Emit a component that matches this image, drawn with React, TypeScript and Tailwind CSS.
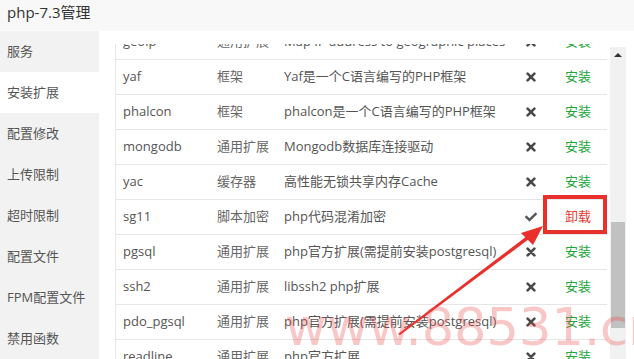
import React from 'react'
import { FaCheck } from 'react-icons/fa'

type Row = {
    name: string
    type: string
    desc: string
    installed: boolean
}

const menu = ['服务', '安装扩展', '配置修改', '上传限制', '超时限制', '配置文件', 'FPM配置文件', '禁用函数']

const rows: Row[] = [
    { name: 'geoip', type: '通用扩展', desc: 'Map IP address to geographic places', installed: false },
    { name: 'yaf', type: '框架', desc: 'Yaf是一个C语言编写的PHP框架', installed: false },
    { name: 'phalcon', type: '框架', desc: 'phalcon是一个C语言编写的PHP框架', installed: false },
    { name: 'mongodb', type: '通用扩展', desc: 'Mongodb数据库连接驱动', installed: false },
    { name: 'yac', type: '缓存器', desc: '高性能无锁共享内存Cache', installed: false },
    { name: 'sg11', type: '脚本加密', desc: 'php代码混淆加密', installed: true },
    { name: 'pgsql', type: '通用扩展', desc: 'php官方扩展(需提前安装postgresql)', installed: false },
    { name: 'ssh2', type: '通用扩展', desc: 'libssh2 php扩展', installed: false },
    { name: 'pdo_pgsql', type: '通用扩展', desc: 'php官方扩展(需提前安装postgresql)', installed: false },
    { name: 'readline', type: '通用扩展', desc: 'php官方扩展', installed: false },
]

const Cross = () => (
    <svg width="10" height="10" viewBox="0 0 10 10">
        <path d="M1.6 1.6 L8.4 8.4 M8.4 1.6 L1.6 8.4" stroke="#4a4a4a" strokeWidth="2.6" strokeLinecap="round" />
    </svg>
)

const App: React.FC = () => {
    return (
        <div
            className="relative w-[634px] h-[359px] overflow-hidden bg-white text-[#555]"
            style={{ fontFamily: '"Open Sans", "Noto Sans CJK SC", sans-serif' }}
        >
            <div className="h-[31px] bg-[#f8f8f8] border-b border-[#fbfbfb] flex items-center pl-[7px] pb-[6px] text-[15px] text-[#333]">
                php-7.3管理
            </div>
            <div className="flex h-[328px]">
                <div className="w-[99px] bg-[#f2f2f2] flex flex-col">
                    {menu.map((m, i) => (
                        <div
                            key={m}
                            className={
                                'h-[41px] shrink-0 flex items-center pl-[7px] text-[13px] ' +
                                (i === 1 ? 'bg-white' : '')
                            }
                        >
                            {m}
                        </div>
                    ))}
                </div>
                <div className="flex-1 flex pl-[16px] pt-[13px]">
                    <div className="w-[492px] h-full overflow-hidden border-l border-[#e6e6e6]">
                        <div className="-mt-[19px]">
                            {rows.map((r) => (
                                <div
                                    key={r.name}
                                    className="h-[35px] flex items-center border-b border-[#e6e6e6] text-[13px]"
                                >
                                    <div className="w-[101px] pl-[7px]">{r.name}</div>
                                    <div className="w-[67px] text-[#666]">{r.type}</div>
                                    <div className="w-[236px] whitespace-nowrap">{r.desc}</div>
                                    <div className="w-[22px] flex justify-center">
                                        {r.installed ? <FaCheck size={12} color="#555" /> : <Cross />}
                                    </div>
                                    <div
                                        className={
                                            'w-[65px] pl-[23px] ' +
                                            (r.installed ? 'text-[#e63a32]' : 'text-[#20a53a]')
                                        }
                                    >
                                        {r.installed ? '卸载' : '安装'}
                                    </div>
                                </div>
                            ))}
                        </div>
                    </div>
                    <div className="ml-[3px] mt-[3px] w-[16px] bg-[#f1f1f1] flex flex-col">
                        <div className="h-[16px] flex items-center justify-center">
                            <div className="w-0 h-0 border-l-[4px] border-r-[4px] border-b-[4px] border-l-transparent border-r-transparent border-b-[#333]" />
                        </div>
                        <div className="mt-[159px] mx-px h-[106px] bg-[#c1c1c1]" />
                    </div>
                </div>
            </div>

            {/* red highlight box */}
            <div className="absolute left-[543px] top-[195px] w-[64px] h-[39px] border-[4px] border-[#e8302c]" />

            {/* arrow */}
            <svg className="absolute left-0 top-0 pointer-events-none" width="634" height="359">
                <polygon points="398,334 527,236 529,239 400,335" fill="#e8302c" />
                <polygon points="543,226 521,233 533,245" fill="#e8302c" />
            </svg>

            {/* watermark */}
            <div
                className="absolute left-[285px] top-[302px] text-[51px] leading-none whitespace-nowrap text-[rgba(238,70,70,0.3)] pointer-events-none"
                style={{ fontFamily: '"DejaVu Sans", sans-serif' }}
            >
                www.88531.cn
            </div>
        </div>
    )
}

export default App
